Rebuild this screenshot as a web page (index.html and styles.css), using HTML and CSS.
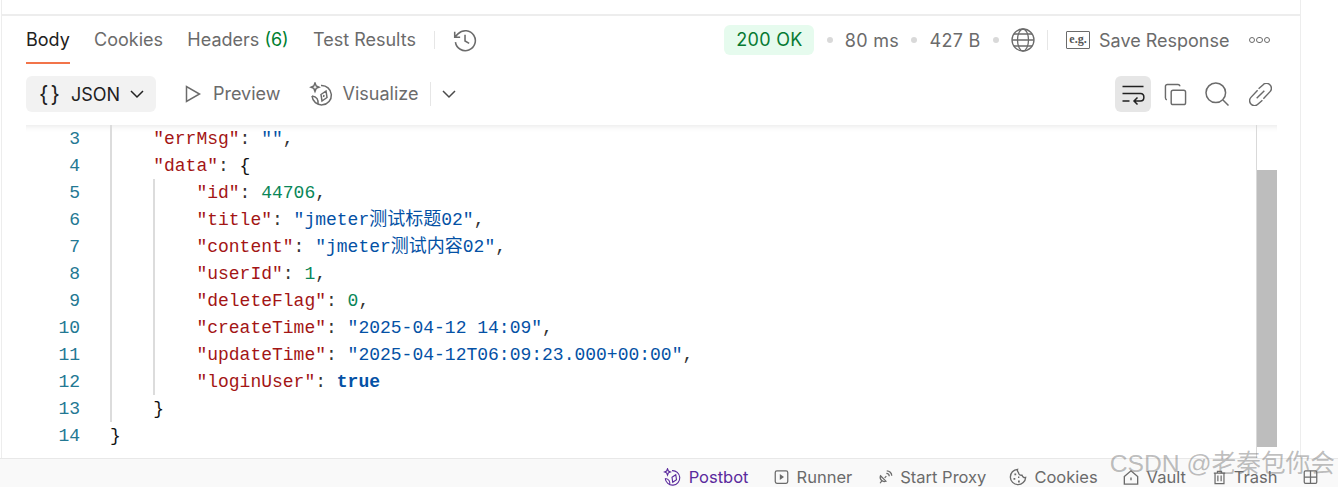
FILE: index.html
```html
<!DOCTYPE html>
<html lang="zh">
<head>
<meta charset="utf-8">
<title>Response</title>
<link rel="stylesheet" href="styles.css">
</head>
<body>
<div class="page">
  <main class="frame">
    <div class="top-gap"></div>
    <section class="panel">
      <header class="tabs-row">
        <nav class="tabs">
          <span class="tab active">Body</span>
          <span class="tab">Cookies</span>
          <span class="tab">Headers <em class="count">(6)</em></span>
          <span class="tab">Test Results</span>
        </nav>
        <span class="divider div-tabs"></span>
        <svg class="icon history" viewBox="0 0 24 24"><path d="M3.300 13.500A9.600 9.600 0 1 0 6 5.400L2.800 8.500M2.600 3.600v5.200h5.200M12.500 6.500v6l4 2.200"/></svg>
        <div class="spacer"></div>
        <span class="badge">200 OK</span>
        <span class="dot"></span>
        <span class="meta metric">80 ms</span>
        <span class="dot"></span>
        <span class="meta metric">427 B</span>
        <span class="dot"></span>
        <svg class="icon globe" viewBox="0 0 24 24"><circle cx="12" cy="12" r="11"/><ellipse cx="12" cy="12" rx="5.500" ry="11"/><path d="M3 6h18M3 18h18M1 12h22"/></svg>
        <span class="divider div-save"></span>
        <span class="eg">e.g.</span>
        <span class="meta save">Save Response</span>
        <span class="more"><i></i><i></i><i></i></span>
      </header>
      <div class="view-row">
        <div class="format"><span class="braces">{ }</span><span class="json">JSON</span>
          <svg class="chev" viewBox="0 0 14 14"><path d="M1 4l6 6 6-6"/></svg></div>
        <svg class="icon play" viewBox="0 0 16 18"><path d="M1.500 1.500v15L14.500 9z"/></svg>
        <span class="view-label">Preview</span>
        <svg class="icon viz" viewBox="0 0 24 24"><path d="M12 3.500A9.700 9.700 0 1 1 3 14"/><path d="M3 14c5 .5 6.500 4 6 8M17 9l-5 3.500 1 6.500 5-3.500zM15 13l-.5 2"/><path d="M6 1l1.200 3L10 5.200 7.200 6.400 6 9.500 4.800 6.400 2 5.200 4.800 4z"/></svg>
        <span class="view-label">Visualize</span>
        <span class="divider div-viz"></span>
        <svg class="chev chev-viz" viewBox="0 0 14 14"><path d="M1 4l6 6 6-6"/></svg>
        <div class="spacer"></div>
        <span class="wrap-btn"><svg class="icon wrap" viewBox="0 0 24 24"><path d="M1.500 4.500h21M1.500 19h7M1.500 11.500h18c4.500 0 4.500 7.500 0 7.500h-6M16.500 15.500l-3.500 3.500 3.500 3.500"/></svg></span>
        <svg class="icon copy" viewBox="0 0 24 24"><rect x="7.500" y="7.500" width="15" height="15" rx="2"/><path d="M3 17.500A2 2 0 0 1 1.500 15.500V3.500a2 2 0 0 1 2-2h11a2 2 0 0 1 2 2"/></svg>
        <svg class="icon search" viewBox="0 0 24 24"><circle cx="10.800" cy="10.800" r="9.800"/><path d="M18 18l5.500 5.500"/></svg>
        <svg class="icon link" viewBox="0 0 24 24"><path d="M10 6l4.500-4a5 5 0 0 1 7.500 7l-7 7.500M14 18l-4.500 4a5 5 0 0 1-7.500-7l7-7.500M8 16l8-8"/></svg>
      </div>
      <div class="code-view">
        <div class="gutter">
          <div>3</div><div>4</div><div>5</div><div>6</div><div>7</div><div>8</div><div>9</div><div>10</div><div>11</div><div>12</div><div>13</div><div>14</div>
        </div>
        <div class="code">
          <div class="guide">
            <div class="line"><span class="k">"errMsg"</span>: <span class="s">""</span>,</div>
            <div class="line"><span class="k">"data"</span>: <span class="b">{</span></div>
            <div class="guide">
              <div class="line"><span class="k">"id"</span>: <span class="n">44706</span>,</div>
              <div class="line"><span class="k">"title"</span>: <span class="s">"jmeter测试标题02"</span>,</div>
              <div class="line"><span class="k">"content"</span>: <span class="s">"jmeter测试内容02"</span>,</div>
              <div class="line"><span class="k">"userId"</span>: <span class="n">1</span>,</div>
              <div class="line"><span class="k">"deleteFlag"</span>: <span class="n">0</span>,</div>
              <div class="line"><span class="k">"createTime"</span>: <span class="s">"2025-04-12 14:09"</span>,</div>
              <div class="line"><span class="k">"updateTime"</span>: <span class="s">"2025-04-12T06:09:23.000+00:00"</span>,</div>
              <div class="line"><span class="k">"loginUser"</span>: <span class="t">true</span></div>
            </div>
            <div class="line"><span class="b">}</span></div>
          </div>
          <div class="line"><span class="b">}</span></div>
        </div>
        <div class="scrollbar"><div class="thumb"></div></div>
      </div>
    </section>
  </main>
  <footer class="status">
    <span class="st st-bot"><svg class="icon st-i i-bot" viewBox="0 0 24 24"><path d="M12 3.500A9.700 9.700 0 1 1 3 14"/><path d="M3 14c5 .5 6.500 4 6 8M17 9l-5 3.500 1 6.500 5-3.500z"/><path d="M6 1l1.200 3L10 5.200 7.200 6.400 6 9.500 4.800 6.400 2 5.200 4.800 4z"/></svg>Postbot</span>
    <span class="st"><svg class="icon st-i i-run" viewBox="0 0 18 18"><rect x="1.500" y="1.500" width="15" height="15" rx="2"/><path class="fill" d="M7 5.500v7l5-3.500z"/></svg>Runner</span>
    <span class="st st-proxy"><svg class="icon st-i i-run" viewBox="0 0 18 18"><path d="M3 7.500l6.500 6.500a5 5 0 0 1-6.500-6.500zM5 13l-2.500 3.500M8 10l2-2M10 4.500a3.500 3.500 0 0 1 3.500 3.500M10.500 1.500a6 6 0 0 1 6 6"/></svg>Start Proxy</span>
    <span class="st"><svg class="icon st-i i-bot" viewBox="0 0 20 20"><path d="M9.500 1.500a8.500 8.500 0 1 0 9 9c-2 .5-3.500-.5-4-2.500-2 .5-4-1-4-3-1-1-1.500-2-1-3.500z"/><path class="fill" d="M6 6h2v2H6zM5 11h2v2H5zM10 14h2v2h-2zM10 9.500h1.500v1.500H10z"/></svg>Cookies</span>
    <span class="st st-vault"><svg class="icon st-i i-vault" viewBox="0 0 18 18"><path d="M1.500 8L9 1.500 16.500 8v8.500h-15zM9 9v3"/></svg>Vault</span>
    <span class="st"><svg class="icon st-i i-trash" viewBox="0 0 16 18"><path d="M1 3.500h14M5.500 3.500V1.500h5v2M2.500 3.500v13h11v-13M6 6.500v7M10 6.500v7"/></svg>Trash</span>
    <svg class="icon st-i i-run layout" viewBox="0 0 18 18"><rect x="1.500" y="1.500" width="15" height="15" rx="1.500"/><path d="M9 1.500v15M1.500 9h15"/></svg>
  </footer>
  <div class="watermark">CSDN @老秦包你会</div>
</div>
</body>
</html>
```
FILE: styles.css
```css
* { box-sizing: border-box; }
html, body { margin: 0; padding: 0; }
body { background: #fff; font-family: Inter, "Noto Sans", sans-serif; color: #6b6b6b; }
.page { position: relative; width: 1338px; height: 487px; overflow: hidden; display: flex; flex-direction: column; }
.frame { margin-left: 1px; width: 1300px; height: 458px; border-left: 1px solid #ededed; border-right: 1px solid #ededed; display: flex; flex-direction: column; }
.top-gap { height: 14px; flex: none; }
.panel { border-top: 2px solid #ededed; flex: 1; display: flex; flex-direction: column; min-height: 0; }
.icon { fill: none; stroke: #6b6b6b; stroke-width: 1.500; flex: none; display: block; }
.icon .fill { fill: #6b6b6b; stroke: none; }
.spacer { flex: 1; }
.divider { width: 1px; background: #e6e6e6; flex: none; }

.tabs-row { height: 48px; flex: none; display: flex; align-items: center; padding: 0 30px 0 24px; font-size: 18px; }
.tabs { display: flex; gap: 24.300px; align-self: stretch; }
.tab { height: 48px; line-height: 47px; border-bottom: 2px solid transparent; white-space: nowrap; }
.tab.active { color: #212121; border-bottom-color: #f2744a; }
.count { font-style: normal; color: #007f31; }
.div-tabs { height: 18px; margin: 0 17px 0 18px; }
.history { width: 25px; height: 25px; }

.badge { width: 90px; height: 30px; line-height: 30px; text-align: center; background: #e6fbee; color: #067a33; border-radius: 6px; letter-spacing: .3px; }
.dot { width: 6px; height: 6px; border-radius: 50%; background: #d9d9d9; margin: 0 12.200px; flex: none; }
.meta { white-space: nowrap; }
.metric { letter-spacing: .3px; }
.globe { width: 24px; height: 24px; stroke-width: 1.300; }
.div-save { height: 20px; margin: 0 18px 0 12px; }
.eg { width: 24px; height: 18px; border: 1.500px solid #6b6b6b; border-radius: 1px; font: 700 12px/15px "Liberation Serif", serif; text-align: center; color: #555; }
.save { margin-left: 9px; }
.more { display: flex; gap: 1px; margin-left: 19px; }
.more i { width: 6.500px; height: 6.500px; border: 1.500px solid #6b6b6b; border-radius: 50%; }

.view-row { height: 61px; flex: none; display: flex; align-items: flex-start; padding: 12px 28px 0 24px; font-size: 18px; }
.format { width: 130px; height: 36px; background: #f2f2f2; border-radius: 6px; display: flex; align-items: center; color: #212121; padding-left: 13px; }
.braces { font-size: 22px; letter-spacing: -2px; width: 32px; flex: none; white-space: nowrap; }
.json { width: 59px; flex: none; }
.chev { width: 14px; height: 14px; fill: none; stroke: #4a4a4a; stroke-width: 1.500; flex: none; }
.format .chev { stroke: #212121; }
.play { width: 16px; height: 18px; margin: 9px 12px 0 29px; }
.view-label { line-height: 36px; white-space: nowrap; }
.viz { width: 24px; height: 24px; margin: 6px 10px 0 28px; }
.div-viz { height: 24px; margin: 6px 11px 0 12px; }
.chev-viz { margin-top: 11px; }
.wrap-btn { width: 36px; height: 36px; background: #e6e6e6; border-radius: 6px; display: flex; align-items: center; justify-content: center; }
.wrap { width: 24px; height: 24px; stroke: #212121; }
.copy { width: 23px; height: 23px; margin: 7px 0 0 13px; }
.search { width: 24px; height: 24px; margin: 6px 0 0 18px; }
.link { width: 23px; height: 23px; margin: 7px 0 0 20px; }

.code-view { flex: 1; min-height: 0; margin: 0 23px 0 24px; display: flex; overflow: hidden; box-shadow: inset 0 7px 6px -6px rgba(0,0,0,.1); font: 18px/27px "Liberation Mono", "Noto Sans CJK SC", monospace; color: #333; }
.gutter { width: 54px; flex: none; text-align: right; color: #237893; }
.gutter div { height: 27px; padding-top: 1px; }
.code { margin-left: 30px; flex: 1; }
.guide { border-left: 2px solid #dcdcdc; padding-left: 41.200px; }
.line { height: 27px; padding-top: 1px; white-space: pre; }
.k { color: #a31515; }
.s { color: #0451a5; }
.n { color: #098658; }
.t { color: #0451a5; font-weight: 700; }
.b { color: #111; }
.scrollbar { width: 21px; flex: none; border-left: 1px solid #d9d9d9; padding-top: 45px; }
.thumb { height: 277px; background: #bdbdbd; }

.status { height: 29px; flex: none; background: #f9f9f9; border-top: 1px solid #e8e8e8; display: flex; align-items: flex-start; justify-content: flex-end; gap: 25.500px; padding: 8px 20px 0 0; font-size: 16.500px; line-height: 20px; }
.st { display: flex; align-items: center; gap: 7.500px; white-space: nowrap; }
.st-i { height: 17px; }
.st-proxy { margin-right: -3px; }
.st-vault { margin-right: 2px; }
.i-bot { width: 18px; height: 18px; }
.i-run { width: 15px; height: 16px; }
.i-vault { width: 16px; }
.i-trash { width: 13px; }
.st-bot { color: #5b2a9d; }
.st-bot .icon { stroke: #5b2a9d; }
.layout { margin-top: 2px; }

.watermark { position: absolute; right: 3px; top: 447px; font: 24.700px/34px "Liberation Sans", "Noto Sans CJK SC", sans-serif; color: rgba(110,110,110,.45); white-space: nowrap; }
```
